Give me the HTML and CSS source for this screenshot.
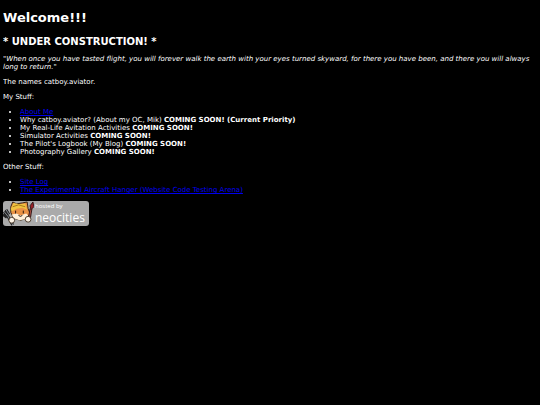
FILE: index.html
```html
<!DOCTYPE html>
<html lang="en">
<head>
<meta charset="utf-8">
<title>catboy.aviator</title>
<link rel="stylesheet" href="styles.css">
</head>
<body>
<h1>Welcome!!!</h1>
<h2>* UNDER CONSTRUCTION! *</h2>
<p><em>"When once you have tasted flight, you will forever walk the earth with your eyes turned skyward, for there you have been, and there you will always long to return."</em></p>
<p>The names catboy.aviator.</p>
<p>My Stuff:</p>
<ul>
  <li><a href="#about">About Me</a></li>
  <li>Why catboy.aviator? (About my OC, Mik) <strong>COMING SOON! (Current Priority)</strong></li>
  <li>My Real-Life Avitation Activities <strong>COMING SOON!</strong></li>
  <li>Simulator Activities <strong>COMING SOON!</strong></li>
  <li>The Pilot's Logbook (My Blog) <strong>COMING SOON!</strong></li>
  <li>Photography Gallery <strong>COMING SOON!</strong></li>
</ul>
<p>Other Stuff:</p>
<ul>
  <li><a href="#log">Site Log</a></li>
  <li><a href="#hanger">The Experimental Aircraft Hanger (Website Code Testing Arena)</a></li>
</ul>
<a class="host" href="#neocities" aria-label="Hosted by Neocities">
  <svg class="cat" viewBox="0 0 32 26" aria-hidden="true">
    <path d="M1 11l4 5M3 9l3 5M0 14l4 3M5 16l5 9" stroke="#222" stroke-width="3" fill="none"/>
    <path d="M1 11l4 5M3 9l3 5M5 16l5 9" stroke="#858b94" stroke-width="1" fill="none"/>
    <path d="M8 6L10 1l4 2 6-1 5-1 1 7 2 5-3 5-7 2-7-2-3-6z" fill="#e99245" stroke="#33220f"/>
    <path d="M8 8L11 2l5 1 7 0 2 6-5-2-6 1-5 3z" fill="#f0c341"/>
    <path d="M10 6l6-2 7 2" fill="none" stroke="#a57918"/>
    <path d="M9 14l5-1 4 2 6-2 2 2-3 4-6 1-6-2z" fill="#fff0d8"/>
    <path d="M13 10v3M21 10v3M16 15l2 1 2-1" fill="none" stroke="#24170f"/>
    <path d="M29 8l-2 12" stroke="#32191a" stroke-width="3"/>
    <path d="M29 8l-2 12" stroke="#ad5044"/>
    <path d="M29 9l-1-4 3-4 1 5z" fill="#9b2128" stroke="#35191a"/>
    <circle cx="9" cy="20" r="3" fill="#fff5e8" stroke="#493a2c"/>
    <circle cx="26" cy="19" r="3" fill="#fff5e8" stroke="#493a2c"/>
  </svg>
  <span class="label"><span class="small">hosted by</span><span class="brand">neocities</span></span>
</a>
</body>
</html>
```
FILE: styles.css
```css
body {
  margin: 10px 3px 3px;
  background: #000;
  color: #fff;
  font: 7px/8px "DejaVu Sans", Verdana, sans-serif;
}
h1 {
  margin: 0 0 9px;
  font-size: 13px;
  line-height: 16px;
}
h2 {
  margin: 0 0 7px;
  font-size: 10px;
  line-height: 13px;
}
p, ul {
  margin: 7px 0;
}
ul {
  padding-left: 17px;
}
a {
  color: #00e;
}
.host {
  display: flex;
  align-items: center;
  width: fit-content;
  height: 25px;
  border-radius: 3px;
  background: #aaa;
  color: #fff;
  text-decoration: none;
}
.cat {
  width: 31px;
  height: 25px;
}
.label {
  display: flex;
  flex-direction: column;
  padding: 0 4px 0 1px;
  font-family: "Open Sans", sans-serif;
}
.small {
  font-size: 6px;
  line-height: 8px;
}
.brand {
  font-size: 12px;
  line-height: 16px;
}
```
